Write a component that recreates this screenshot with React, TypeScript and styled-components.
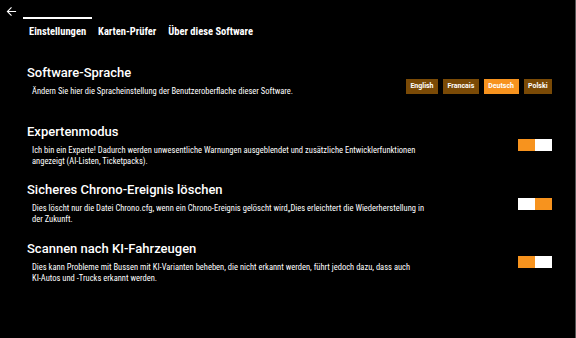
import styled, { createGlobalStyle } from 'styled-components'

const GlobalStyle = createGlobalStyle`
  html, body {
    margin: 0;
    padding: 0;
    background: #000;
  }
  body {
    font-family: Roboto, 'Noto Sans', sans-serif;
    color: #fff;
  }
`

const ORANGE = '#f7931e'
const BROWN = '#7a4a06'
const NARROW = "'Liberation Sans Narrow', 'Roboto Condensed', Roboto, sans-serif"

const Screen = styled.div`
  width: 576px;
  height: 338px;
  background: #000;
  border-right: 1px solid #555;
  box-sizing: border-box;
  overflow: hidden;
`

const Header = styled.div`
  display: flex;
  align-items: flex-start;
  height: 64px;
`

const BackButton = styled.div`
  width: 23px;
  padding: 6px 0 0 6px;
  box-sizing: border-box;
  line-height: 0;
`

const Tabs = styled.div`
  display: flex;
  padding-top: 17px;
`

const Tab = styled.div<{ $active?: boolean }>`
  border-top: 2px solid ${(p) => (p.$active ? '#fff' : 'transparent')};
  padding: 6px 6px 0 6px;
  font-family: ${NARROW};
  font-size: 10.5px;
  font-weight: 700;
  line-height: 13px;
`

const Content = styled.div`
  padding: 0 23px 0 27px;
  display: flex;
  flex-direction: column;
  gap: 14.5px;
`

const Section = styled.div`
  display: flex;
  align-items: center;
  justify-content: space-between;
`

const Text = styled.div`
  display: flex;
  flex-direction: column;
  gap: 5px;
`

const Title = styled.div`
  font-size: 13px;
  font-weight: 500;
  line-height: 17px;
`

const Description = styled.div`
  font-family: ${NARROW};
  font-size: 8.5px;
  line-height: 11px;
  padding-left: 5px;
  max-width: 393px;
  min-height: 22px;
`

const Languages = styled.div`
  display: flex;
  gap: 5px;
  margin-top: 1px;
`

const LangButton = styled.div<{ $active?: boolean }>`
  background: ${(p) => (p.$active ? ORANGE : BROWN)};
  font-size: 7px;
  font-weight: 700;
  padding: 0 4.5px;
  height: 15px;
  line-height: 15px;
`

const Toggle = styled.div<{ $on: boolean }>`
  display: flex;
  flex-direction: ${(p) => (p.$on ? 'row' : 'row-reverse')};
  width: 34px;
  height: 12px;
  margin-top: 1px;
`

const Knob = styled.div`
  flex: 1;
  background: ${ORANGE};
`

const Track = styled.div`
  flex: 1;
  background: #fff;
`

const settings = [
  {
    title: 'Expertenmodus',
    text: 'Ich bin ein Experte! Dadurch werden unwesentliche Warnungen ausgeblendet und zusätzliche Entwicklerfunktionen angezeigt (AI-Listen, Ticketpacks).',
    on: true,
  },
  {
    title: 'Sicheres Chrono-Ereignis löschen',
    text: 'Dies löscht nur die Datei Chrono.cfg, wenn ein Chrono-Ereignis gelöscht wird„Dies erleichtert die Wiederherstellung in der Zukunft.',
    on: false,
  },
  {
    title: 'Scannen nach KI-Fahrzeugen',
    text: 'Dies kann Probleme mit Bussen mit KI-Varianten beheben, die nicht erkannt werden, führt jedoch dazu, dass auch KI-\u2060Autos und -Trucks erkannt werden.',
    on: true,
  },
]

const languages = ['English', 'Francais', 'Deutsch', 'Polski']

export default function App() {
  return (
    <Screen>
      <GlobalStyle />
      <Header>
        <BackButton>
          <svg width="11" height="11" viewBox="0 0 12 12" fill="none" stroke="#fff" strokeWidth="1.2">
            <path d="M11 6H1.5M6 1.5L1.5 6L6 10.5" />
          </svg>
        </BackButton>
        <Tabs>
          <Tab $active>Einstellungen</Tab>
          <Tab>Karten-Prüfer</Tab>
          <Tab>Über diese Software</Tab>
        </Tabs>
      </Header>
      <Content>
        <Section>
          <Text>
            <Title>Software-Sprache</Title>
            <Description>Ändern Sie hier die Spracheinstellung der Benutzeroberflache dieser Software.</Description>
          </Text>
          <Languages>
            {languages.map((l) => (
              <LangButton key={l} $active={l === 'Deutsch'}>
                {l}
              </LangButton>
            ))}
          </Languages>
        </Section>
        {settings.map((s) => (
          <Section key={s.title}>
            <Text>
              <Title>{s.title}</Title>
              <Description>{s.text}</Description>
            </Text>
            <Toggle $on={s.on}>
              <Knob />
              <Track />
            </Toggle>
          </Section>
        ))}
      </Content>
    </Screen>
  )
}
